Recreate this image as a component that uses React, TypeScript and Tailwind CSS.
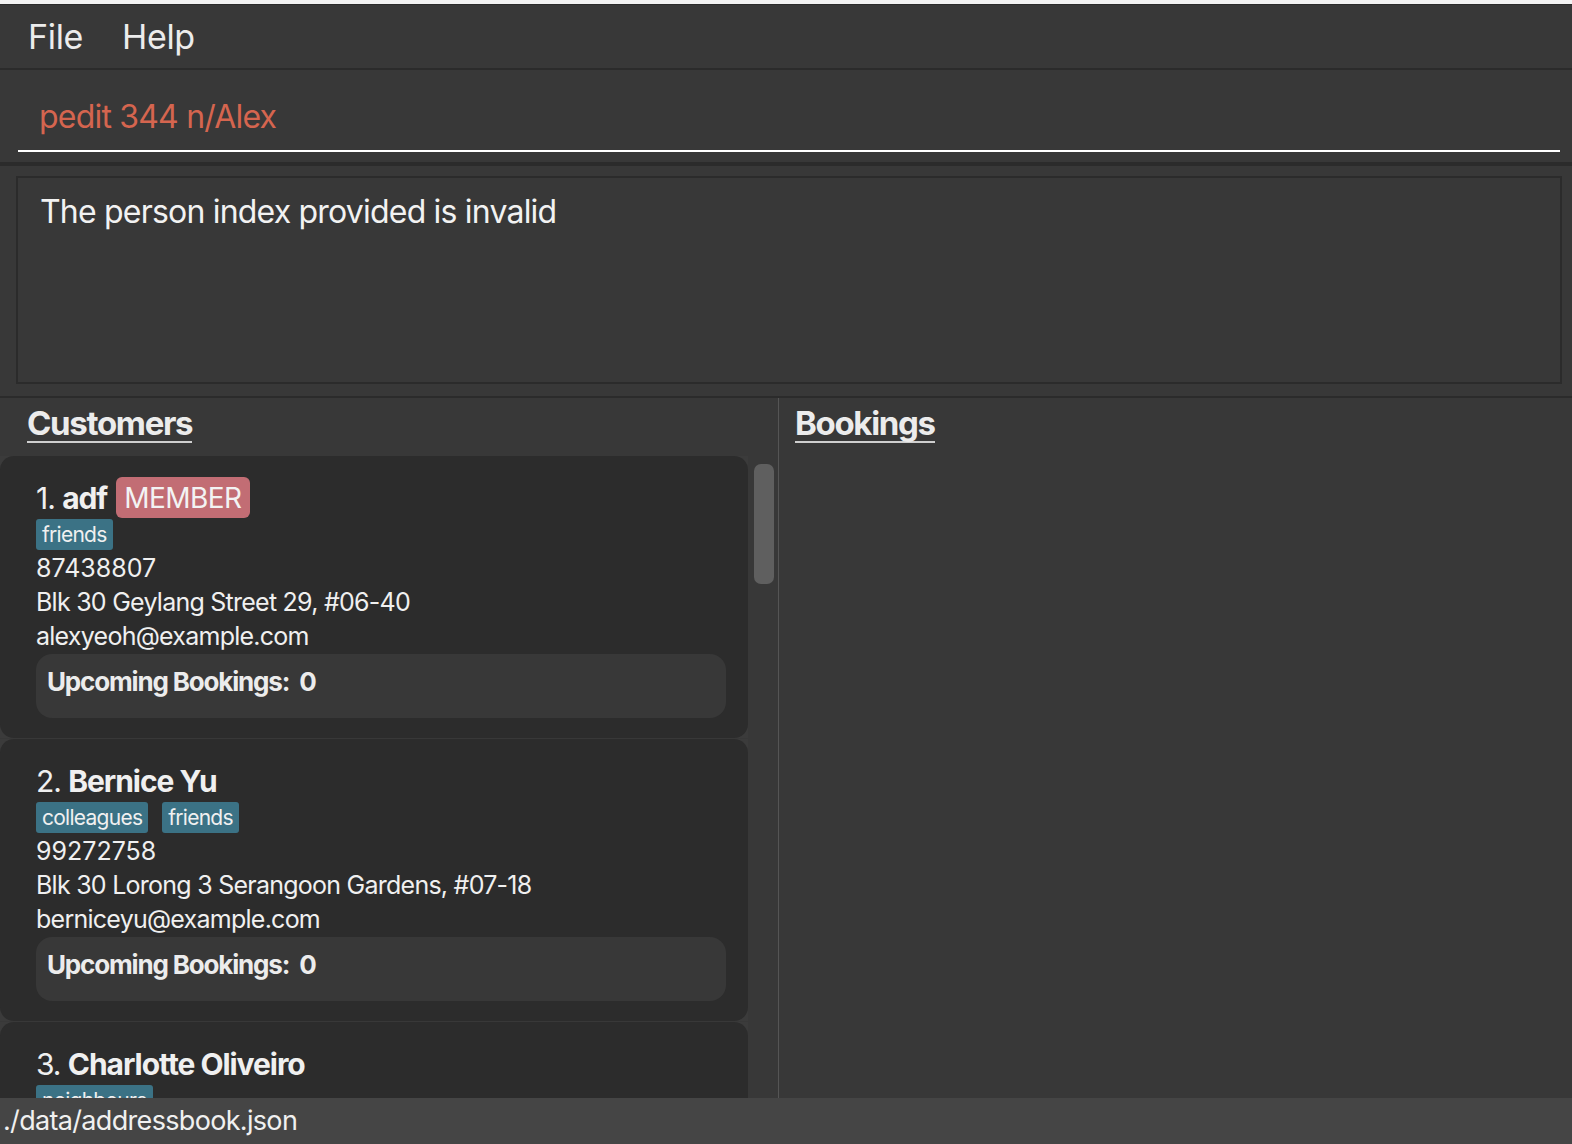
import React from "react";

type Person = {
  idx: number;
  name: string;
  member?: boolean;
  tags: string[];
  phone: string;
  address: string;
  email: string;
};

const people: Person[] = [
  {
    idx: 1,
    name: "adf",
    member: true,
    tags: ["friends"],
    phone: "87438807",
    address: "Blk 30 Geylang Street 29, #06-40",
    email: "alexyeoh@example.com",
  },
  {
    idx: 2,
    name: "Bernice Yu",
    tags: ["colleagues", "friends"],
    phone: "99272758",
    address: "Blk 30 Lorong 3 Serangoon Gardens, #07-18",
    email: "berniceyu@example.com",
  },
  {
    idx: 3,
    name: "Charlotte Oliveiro",
    tags: ["neighbours"],
    phone: "93210283",
    address: "Blk 11 Ang Mo Kio Street 74, #11-04",
    email: "charlotte@example.com",
  },
];

function Card({ p }: { p: Person }) {
  return (
    <div className="bg-[#3b3b3b]">
      <div className="bg-[#2c2c2c] rounded-[14px] pl-[36px] pr-[20px] pt-[21px] pb-[20px] w-[748px]">
        <div className="flex items-center h-[41px] text-[30px] tracking-[-0.035em] text-[#f0f0f0] leading-none">
          <span>{p.idx}.&nbsp;</span>
          <span className="font-bold">{p.name}</span>
          {p.member && (
            <span className="ml-[9px] h-[41px] px-[8px] flex items-center rounded-[6px] bg-[#c26d74] text-[28px] tracking-[-0.02em] font-normal text-[#f3f3f3]">
              MEMBER
            </span>
          )}
        </div>
        <div className="flex gap-[14px] h-[31px] mt-[1px]">
          {p.tags.map((t) => (
            <span
              key={t}
              className="h-[31px] px-[6px] flex items-center rounded-[3px] bg-[#3b7285] text-[21px] tracking-[-0.035em] text-[#f0f0f0] leading-none"
            >
              {t}
            </span>
          ))}
        </div>
        <div className="text-[25px] leading-[34px] tracking-[-0.03em] text-[#f0f0f0] mt-[1px]">
          <div className="tracking-[0em]">{p.phone}</div>
          <div>{p.address}</div>
          <div>{p.email}</div>
        </div>
        <div className="mt-[1px] h-[64px] w-[690px] rounded-[16px] bg-[#383838] pl-[11px] flex items-start pt-[11px]">
          <span className="text-[26px] font-bold tracking-[-0.045em] text-[#ececec] leading-[34px]">
            Upcoming Bookings:&nbsp; 0
          </span>
        </div>
      </div>
    </div>
  );
}

export default function App() {
  return (
    <div
      className="w-[1572px] h-[1144px] flex flex-col bg-[#383838] overflow-hidden"
      style={{ fontFamily: "Inter, 'Noto Sans', sans-serif" }}
    >
      <div className="h-[4px] bg-[#f3f3f3]" />
      <div className="h-[1px] bg-[#2b2b2b]" />
      {/* menu bar */}
      <div className="h-[63px] flex items-center pl-[28px] gap-[39px] text-[34px] tracking-[-0.01em] text-[#ececec]">
        <span>File</span>
        <span>Help</span>
      </div>
      <div className="h-[2px] bg-[#2b2b2b]" />
      {/* command box */}
      <div className="h-[92px] px-[18px] pr-[12px] flex flex-col">
        <div className="flex-1 flex items-center pl-[21px] pt-[14px] text-[32px] tracking-[-0.025em] text-[#d5654f]">
          pedit 344 n/Alex
        </div>
        <div className="h-[2px] bg-white mb-[10px]" />
      </div>
      <div className="h-[4px] bg-[#2b2b2b]" />
      {/* result display */}
      <div className="h-[230px] pt-[10px] pl-[16px] pr-[10px] pb-[12px] flex">
        <div className="flex-1 border-2 border-[#2b2b2b] pl-[22px] pt-[14px]">
          <div className="text-[32px] tracking-[-0.025em] text-[#f2f2f2] leading-[40px]">
            The person index provided is invalid
          </div>
        </div>
      </div>
      <div className="h-[2px] bg-[#2b2b2b]" />
      {/* lists */}
      <div className="flex-1 flex min-h-0">
        <div className="w-[778px] flex flex-col min-h-0">
          <div className="h-[58px] pl-[27px] pt-[7px]">
            <span className="inline-block text-[33px] font-bold tracking-[-0.04em] text-[#ececec] border-b-2 border-[#cfcfcf] leading-[36px]">
              Customers
            </span>
          </div>
          <div className="flex-1 flex min-h-0 overflow-hidden">
            <div className="w-[748px] flex flex-col gap-[1px]">
              {people.map((p) => (
                <Card key={p.idx} p={p} />
              ))}
            </div>
            <div className="flex-1 pl-[6px] pt-[8px]">
              <div className="w-[20px] h-[120px] rounded-[7px] bg-[#5f5f5f]" />
            </div>
          </div>
        </div>
        <div className="w-[1px] bg-[#555555]" />
        <div className="flex-1 pl-[16px] pt-[7px]">
          <span className="inline-block text-[33px] font-bold tracking-[-0.04em] text-[#ececec] border-b-2 border-[#cfcfcf] leading-[36px]">
            Bookings
          </span>
        </div>
      </div>
      {/* status bar */}
      <div className="h-[46px] bg-[#454545] flex items-center pl-[3px] text-[27px] tracking-[-0.025em] text-[#f0f0f0]">
        ./data/addressbook.json
      </div>
    </div>
  );
}
